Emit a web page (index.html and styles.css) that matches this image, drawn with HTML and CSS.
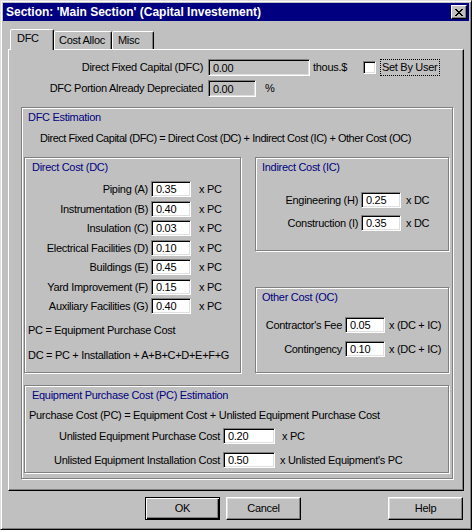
FILE: index.html
```html
<!DOCTYPE html>
<html>
<head>
<meta charset="utf-8">
<link rel="stylesheet" href="styles.css">
</head>
<body>
<div class="window">
  <div class="titlebar">
    <span class="title">Section: 'Main Section' (Capital Investement)</span>
    <span class="close"><svg width="8" height="7" viewBox="0 0 8 7" shape-rendering="crispEdges"><path d="M0 0h2v1H0zM6 0h2v1H6zM1 1h2v1H1zM5 1h2v1H5zM2 2h4v1H2zM3 3h2v1H3zM2 4h4v1H2zM1 5h2v1H1zM5 5h2v1H5zM0 6h2v1H0zM6 6h2v1H6z" fill="#000"/></svg></span>
  </div>
  <div class="tabs">
    <div class="tab active">DFC</div>
    <div class="tab t-cost">Cost Alloc</div>
    <div class="tab t-misc">Misc</div>
  </div>
  <div class="panel">
    <div class="frow r1">
      <span class="flabel">Direct Fixed Capital (DFC)</span>
      <input class="edit dis w102" value="0.00">
      <span class="unit-thous">thous.$</span>
      <span class="check"></span>
      <span class="focus">Set By User</span>
    </div>
    <div class="frow r2">
      <span class="flabel">DFC Portion Already Depreciated</span>
      <input class="edit dis w48" value="0.00">
      <span class="unit-pct">%</span>
    </div>
    <div class="group est">
      <div class="gtitle">DFC Estimation</div>
      <div class="formula">Direct Fixed Capital (DFC) = Direct Cost (DC) + Indirect Cost (IC) + Other Cost (OC)</div>
      <div class="cols">
        <div class="group direct">
          <div class="gtitle">Direct Cost (DC)</div>
          <div class="grid dgrid">
            <span class="lbl">Piping (A)</span><input class="edit" value="0.35"><span class="u">x PC</span>
            <span class="lbl">Instrumentation (B)</span><input class="edit" value="0.40"><span class="u">x PC</span>
            <span class="lbl">Insulation (C)</span><input class="edit" value="0.03"><span class="u">x PC</span>
            <span class="lbl">Electrical Facilities (D)</span><input class="edit" value="0.10"><span class="u">x PC</span>
            <span class="lbl">Buildings (E)</span><input class="edit" value="0.45"><span class="u">x PC</span>
            <span class="lbl">Yard Improvement (F)</span><input class="edit" value="0.15"><span class="u">x PC</span>
            <span class="lbl">Auxiliary Facilities (G)</span><input class="edit" value="0.40"><span class="u">x PC</span>
          </div>
          <div class="note n1">PC = Equipment Purchase Cost</div>
          <div class="note n2">DC = PC + Installation + A+B+C+D+E+F+G</div>
        </div>
        <div class="rcol">
          <div class="group indirect">
            <div class="gtitle">Indirect Cost (IC)</div>
            <div class="grid igrid">
              <span class="lbl">Engineering (H)</span><input class="edit" value="0.25"><span class="u">x DC</span>
              <span class="lbl">Construction (I)</span><input class="edit" value="0.35"><span class="u">x DC</span>
            </div>
          </div>
          <div class="group other">
            <div class="gtitle">Other Cost (OC)</div>
            <div class="grid ogrid">
              <span class="lbl">Contractor's Fee</span><input class="edit" value="0.05"><span class="u">x (DC + IC)</span>
              <span class="lbl">Contingency</span><input class="edit" value="0.10"><span class="u">x (DC + IC)</span>
            </div>
          </div>
        </div>
      </div>
      <div class="group equip">
        <div class="gtitle">Equipment Purchase Cost (PC) Estimation</div>
        <div class="formula2">Purchase Cost (PC) = Equipment Cost + Unlisted Equipment Purchase Cost</div>
        <div class="grid egrid">
          <span class="lbl">Unlisted Equipment Purchase Cost</span><input class="edit" value="0.20"><span class="u">x PC</span>
          <span class="lbl">Unlisted Equipment Installation Cost</span><input class="edit" value="0.50"><span class="u u2">x Unlisted Equipment's PC</span>
        </div>
      </div>
    </div>
  </div>
  <div class="buttons">
    <button class="btn default">OK</button>
    <button class="btn cancel">Cancel</button>
    <button class="btn help">Help</button>
  </div>
</div>
</body>
</html>
```
FILE: styles.css
```css
* { box-sizing: border-box; }
html, body { margin: 0; padding: 0; }
body {
  background: #c0c0c0;
  font-family: "Liberation Sans", Arial, sans-serif;
  font-size: 11px;
  letter-spacing: -0.3px;
  line-height: 13px;
  color: #000;
}
.window {
  width: 472px;
  height: 530px;
  border: 1px solid;
  border-color: #dfdfdf #000 #000 #dfdfdf;
  box-shadow: inset 1px 1px #fff, inset -1px -1px #808080;
  padding: 2px;
  background: #c0c0c0;
}
.titlebar {
  height: 18px;
  background: #000080;
  display: flex;
  align-items: center;
  padding-left: 3px;
  padding-right: 2px;
}
.title {
  flex: 1;
  color: #fff;
  font-weight: bold;
  font-size: 12px;
  letter-spacing: 0;
  white-space: nowrap;
}
.close {
  width: 16px;
  height: 14px;
  background: #c0c0c0;
  border: 1px solid;
  border-color: #fff #000 #000 #fff;
  box-shadow: inset -1px -1px #808080;
  display: flex;
  align-items: center;
  justify-content: center;
}
.close svg { display: block; }
.tabs {
  display: flex;
  align-items: flex-end;
  height: 20px;
  margin-top: 8px;
  padding-left: 7px;
}
.tab {
  height: 18px;
  background: #c0c0c0;
  border: 1px solid;
  border-bottom: none;
  border-color: #fff #000 transparent #fff;
  border-radius: 2px 2px 0 0;
  box-shadow: inset -1px 0 #808080;
  padding-top: 2px;
  white-space: nowrap;
}
.tab.active {
  width: 44px;
  height: 21px;
  margin-bottom: -1px;
  position: relative;
  z-index: 1;
  padding-left: 6px;
}
.t-cost { width: 58px; padding-left: 4px; }
.t-misc { width: 42px; padding-left: 5px; }
.panel {
  margin-left: 5px;
  width: 456px;
  height: 442px;
  border: 1px solid;
  border-color: #fff #000 #000 #fff;
  box-shadow: inset -1px -1px #808080;
}
.frow {
  display: flex;
  align-items: center;
  height: 17px;
}
.r1 { margin-top: 9px; }
.r2 { margin-top: 4px; }
.flabel {
  width: 195px;
  text-align: right;
  padding-right: 1px;
  white-space: nowrap;
}
.edit {
  display: block;
  width: 40px;
  height: 16px;
  margin: 0;
  padding: 0 0 0 4px;
  border: 1px solid;
  border-color: #808080 #fff #fff #808080;
  box-shadow: inset 1px 1px #000, inset -1px -1px #dfdfdf;
  background: #fff;
  font: inherit;
  letter-spacing: inherit;
  color: #000;
  outline: none;
}
.edit.dis { background: #c0c0c0; height: 17px; margin-left: 4px; }
.w102 { width: 102px !important; }
.w48 { width: 48px !important; }
.unit-thous { width: 50px; margin-left: 3px; white-space: nowrap; }
.unit-pct { margin-left: 9px; }
.check {
  width: 13px;
  height: 13px;
  background: #fff;
  border: 1px solid;
  border-color: #808080 #fff #fff #808080;
  box-shadow: inset 1px 1px #000, inset -1px -1px #dfdfdf;
}
.focus {
  margin-left: 4px;
  height: 17px;
  line-height: 15px;
  padding: 0 2px 0 1px;
  border: 1px dotted #000;
  white-space: nowrap;
}
.group {
  border: 1px solid #808080;
  box-shadow: inset 1px 1px #fff, 1px 1px #fff;
}
.gtitle {
  color: #000080;
  margin-top: 3px;
  padding-left: 7px;
  white-space: nowrap;
}
.est {
  margin-top: 10px;
  margin-left: 12px;
  width: 432px;
  height: 372px;
}
.est > .gtitle { padding-left: 6px; }
.formula {
  margin-top: 8px;
  padding-left: 18px;
  letter-spacing: -0.47px;
  white-space: nowrap;
}
.cols {
  display: flex;
  align-items: flex-start;
  margin-top: 12px;
  margin-left: 2px;
}
.direct { width: 217px; height: 216px; }
.rcol { margin-left: 14px; }
.indirect { width: 194px; height: 94px; }
.indirect > .gtitle, .other > .gtitle { padding-left: 6px; }
.other { width: 194px; height: 86px; margin-top: 36px; }
.grid { display: grid; align-items: start; }
.lbl {
  text-align: right;
  padding-right: 3px;
  line-height: 16px;
  white-space: nowrap;
}
.u { line-height: 16px; white-space: nowrap; }
.dgrid {
  margin-top: 7px;
  grid-template-columns: 126px 48px auto;
  grid-template-rows: 20px 19px 20px 19px 20px 19px 16px;
}
.note { padding-left: 3px; white-space: nowrap; }
.n1 { margin-top: 10px; }
.n2 { margin-top: 12px; }
.igrid {
  margin-top: 18px;
  grid-template-columns: 105px 45px auto;
  grid-template-rows: 23px 16px;
}
.ogrid {
  margin-top: 13px;
  grid-template-columns: 89px 44px auto;
  grid-template-rows: 24px 16px;
}
.equip {
  width: 425px;
  height: 88px;
  margin-top: 12px;
  margin-left: 2px;
}
.formula2 { margin-top: 7px; padding-left: 4px; white-space: nowrap; }
.egrid {
  margin-top: 6px;
  grid-template-columns: 198px 59px auto;
  grid-template-rows: 24px 16px;
}
.egrid .edit { width: 52px; }
.u2 { margin-left: -2px; }
.buttons {
  display: flex;
  margin-top: 6px;
  height: 23px;
}
.btn {
  width: 75px;
  height: 23px;
  margin: 0;
  padding: 0;
  background: #c0c0c0;
  border: 1px solid;
  border-color: #fff #000 #000 #fff;
  box-shadow: inset -1px -1px #808080, inset 1px 1px #dfdfdf;
  font: inherit;
  letter-spacing: inherit;
  color: #000;
}
.btn.default {
  margin-left: 142px;
  border-color: #000;
  box-shadow: inset 1px 1px #fff, inset -1px -1px #000, inset -2px -2px #808080;
}
.cancel { margin-left: 6px; }
.help { margin-left: 87px; }
```
